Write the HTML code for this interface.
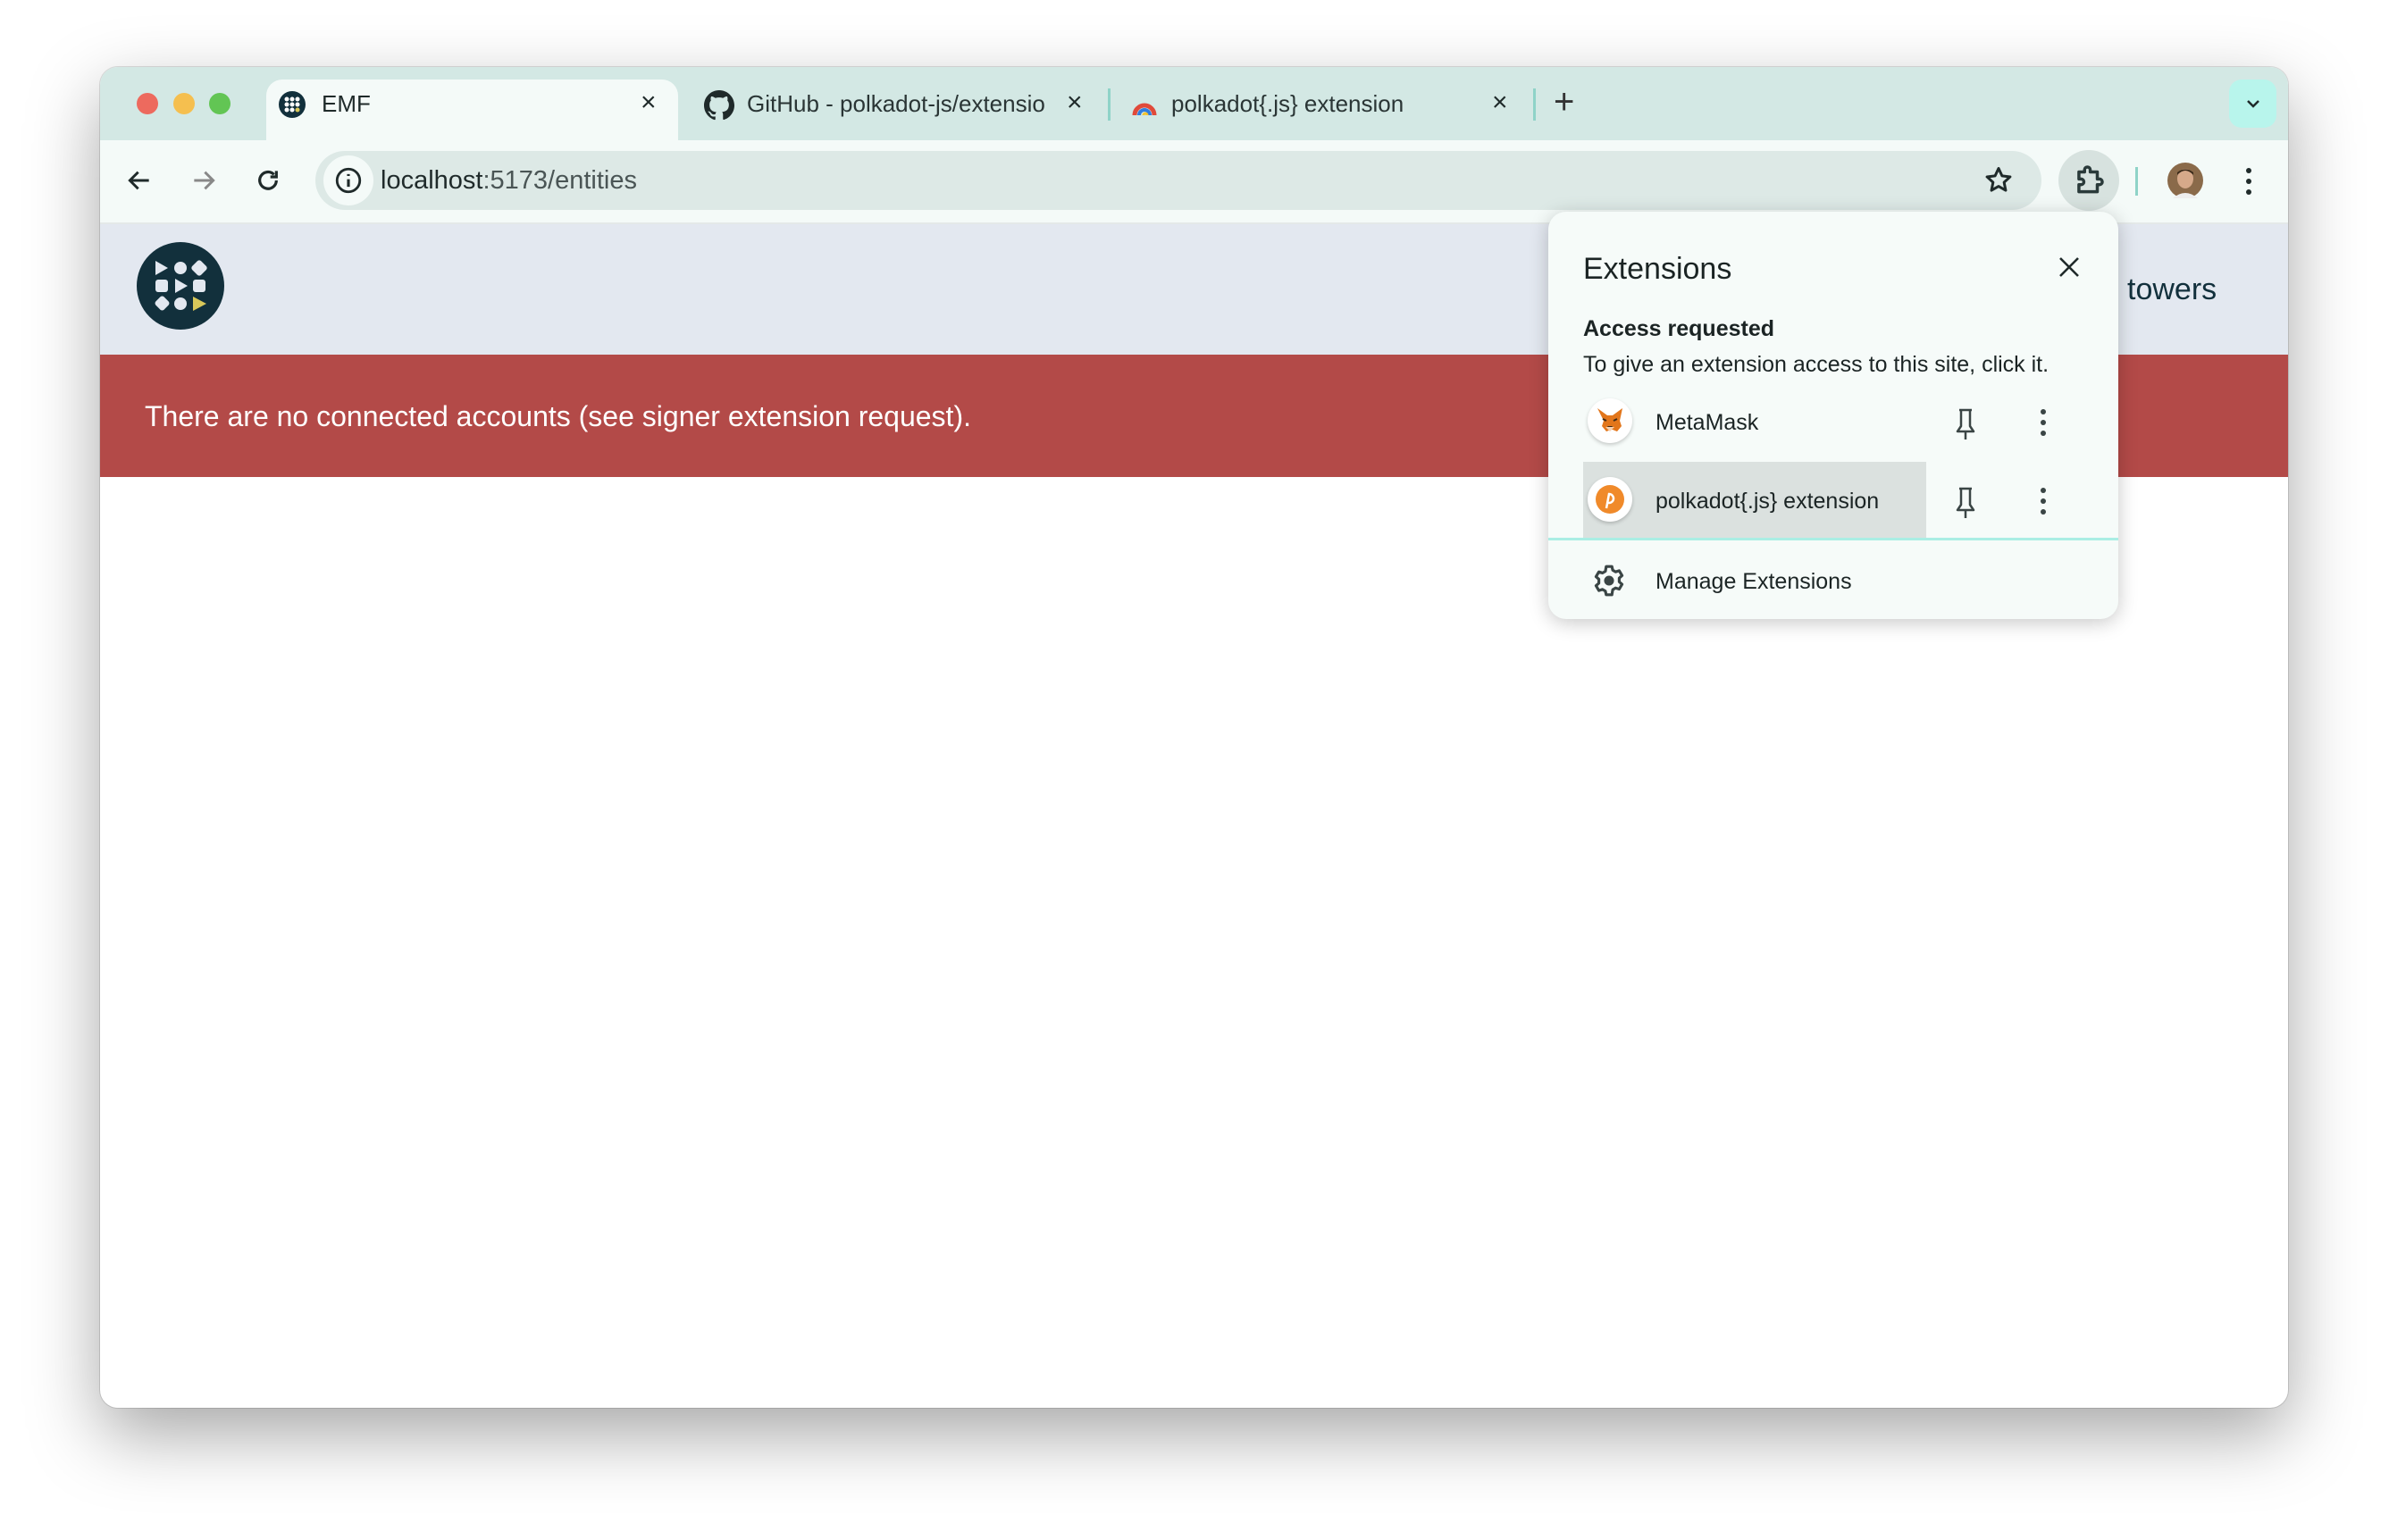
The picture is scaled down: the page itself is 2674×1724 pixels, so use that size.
<!DOCTYPE html>
<html><head><meta charset="utf-8"><style>
*{margin:0;padding:0;box-sizing:border-box}
body{width:2674px;height:1724px;background:#fff;position:relative;overflow:hidden;font-family:"Liberation Sans",sans-serif;color:#1f2a2a}
.abs{position:absolute}
#win{left:112px;top:75px;width:2449px;height:1501px;border-radius:20px;background:#fff;overflow:hidden;box-shadow:0 30px 80px rgba(0,0,0,.35),0 0 0 1px rgba(0,0,0,.12)}
.t{position:absolute;white-space:nowrap}
</style></head><body>
<div id="win" class="abs">
 <div class="abs" style="left:0;top:0;width:2449px;height:82px;background:#d3e8e4"></div>
 <div class="abs" style="left:41px;top:29px;width:24px;height:24px;border-radius:50%;background:#ed6a5e"></div>
 <div class="abs" style="left:82px;top:29px;width:24px;height:24px;border-radius:50%;background:#f5bf4f"></div>
 <div class="abs" style="left:122px;top:29px;width:24px;height:24px;border-radius:50%;background:#62c554"></div>
 <div class="abs" style="left:186px;top:14px;width:461px;height:80px;background:#f4faf8;border-radius:18px 18px 0 0"></div>
 <svg class="abs" style="left:199px;top:26px" width="32" height="32" viewBox="0 0 32 32"><circle cx="16" cy="16" r="15" fill="#12303c"/><g fill="#fff"><circle cx="10" cy="10" r="2.5"/><circle cx="16" cy="10" r="2.5"/><circle cx="22" cy="10" r="2.5"/><circle cx="10" cy="16" r="2.5"/><circle cx="16" cy="16" r="2.5"/><circle cx="22" cy="16" r="2.5"/><circle cx="10" cy="22" r="2.5"/><circle cx="16" cy="22" r="2.5"/></g><circle cx="22" cy="22" r="2.5" fill="#d8c85a"/></svg>
 <div class="t" style="left:248px;top:26px;font-size:26px">EMF</div>
 <div class="t" style="left:605px;top:23px;font-size:30px">×</div>
 <svg class="abs" style="left:676px;top:26px" width="34" height="34" viewBox="0 0 16 16"><path fill="#1f2a2a" d="M8 0C3.6 0 0 3.6 0 8c0 3.5 2.3 6.5 5.5 7.6.4.1.5-.2.5-.4v-1.4c-2.2.5-2.7-1-2.7-1-.4-.9-.9-1.200-.9-1.2-.7-.5.1-.5.1-.5.8.1 1.2.8 1.2.8.7 1.2 1.9.9 2.3.7.1-.5.3-.9.5-1.1-1.8-.2-3.6-.9-3.6-4 0-.9.3-1.6.8-2.1-.1-.2-.4-1 .1-2.1 0 0 .7-.2 2.2.8.6-.2 1.3-.3 2-.3s1.4.1 2 .3c1.5-1 2.2-.8 2.2-.8.4 1.1.2 1.9.1 2.1.5.6.8 1.3.8 2.1 0 3.1-1.9 3.7-3.6 3.9.3.3.5.8.5 1.5v2.2c0 .2.1.5.6.4C13.7 14.5 16 11.5 16 8c0-4.4-3.6-8-8-8z"/></svg>
 <div class="t" style="left:724px;top:26px;font-size:26px;color:#2a3535">GitHub - polkadot-js/extensio</div>
 <div class="t" style="left:1082px;top:23px;font-size:30px">×</div>
 <div class="abs" style="left:1128px;top:24px;width:3px;height:36px;background:#8fd3c8"></div>
 <svg class="abs" style="left:1155px;top:30px" width="28" height="28" viewBox="0 0 28 28"><path d="M3 24a11 11 0 0 1 22 0" fill="none" stroke="#e04a3a" stroke-width="5"/><path d="M8 24a6 6 0 0 1 12 0" fill="none" stroke="#2f7de0" stroke-width="4"/><path d="M13 24a2 2 0 0 1 4 0" fill="none" stroke="#f4c430" stroke-width="3"/></svg>
 <div class="t" style="left:1199px;top:26px;font-size:26px;color:#2a3535">polkadot{.js} extension</div>
 <div class="t" style="left:1558px;top:23px;font-size:30px">×</div>
 <div class="abs" style="left:1604px;top:24px;width:3px;height:36px;background:#8fd3c8"></div>
 <div class="t" style="left:1627px;top:17px;font-size:40px;font-weight:300;color:#333">+</div>
 <div class="abs" style="left:2383px;top:14px;width:53px;height:54px;border-radius:14px;background:#b8f5ec"></div>
 <svg class="abs" style="left:2400px;top:32px" width="20" height="18" viewBox="0 0 20 18"><path d="M4 6l6 6 6-6" fill="none" stroke="#1f2a2a" stroke-width="2.5"/></svg>
 <div class="abs" style="left:0;top:82px;width:2449px;height:92px;background:#f4faf8"></div>
 <svg class="abs" style="left:28px;top:111px" width="32" height="32" viewBox="0 0 24 24"><path d="M20 12H5M11 5l-7 7 7 7" fill="none" stroke="#1f2a2a" stroke-width="2.2"/></svg>
 <svg class="abs" style="left:100px;top:111px" width="32" height="32" viewBox="0 0 24 24"><path d="M4 12h15M13 5l7 7-7 7" fill="none" stroke="#888" stroke-width="2.2"/></svg>
 <svg class="abs" style="left:172px;top:111px" width="32" height="32" viewBox="0 0 24 24"><path d="M19 12a7 7 0 1 1-2-5" fill="none" stroke="#1f2a2a" stroke-width="2.4"/><path d="M19 4v5h-5" fill="none" stroke="#1f2a2a" stroke-width="2.4"/></svg>
 <div class="abs" style="left:241px;top:94px;width:1932px;height:66px;border-radius:33px;background:#dde9e6"></div>
 <div class="abs" style="left:250px;top:99px;width:56px;height:56px;border-radius:50%;background:#f4faf8"></div>
 <svg class="abs" style="left:261px;top:110px" width="34" height="34" viewBox="0 0 24 24"><circle cx="12" cy="12" r="9" fill="none" stroke="#1f2a2a" stroke-width="2"/><path d="M12 11v6M12 7v1.5" stroke="#1f2a2a" stroke-width="2.2"/></svg>
 <div class="t" style="left:314px;top:111px;font-size:29px;color:#1f2a2a">localhost<span style="color:#4a5555">:5173/entities</span></div>
 <svg class="abs" style="left:2107px;top:109px" width="36" height="36" viewBox="0 0 24 24"><path d="M12 3l2.6 5.6 6 .7-4.5 4.1 1.2 6-5.3-3-5.3 3 1.2-6L3.4 9.3l6-.7z" fill="none" stroke="#1f2a2a" stroke-width="2" stroke-linejoin="round"/></svg>
 <div class="abs" style="left:2192px;top:93px;width:68px;height:68px;border-radius:50%;background:#d7e2df"></div>
 <svg class="abs" style="left:2207px;top:108px" width="38" height="38" viewBox="0 0 24 24"><path d="M5 6h4V4.5a2 2 0 0 1 4 0V6h5v5h1.5a2 2 0 0 1 0 4H18v5H5v-5h1.5a2 2 0 0 0 0-4H5z" fill="none" stroke="#2a3a3a" stroke-width="2.2" stroke-linejoin="round"/></svg>
 <div class="abs" style="left:2278px;top:112px;width:3px;height:32px;background:#8fd3c8"></div>
 <svg class="abs" style="left:2314px;top:107px" width="40" height="40" viewBox="0 0 40 40"><circle cx="20" cy="20" r="20" fill="#8a6a4a"/><ellipse cx="20" cy="18" rx="9" ry="11" fill="#d6a98a"/><path d="M11 14q9-10 18 0v-3q-9-7-18 0z" fill="#3a2a1a"/><path d="M6 40q14-12 28 0z" fill="#eee"/></svg>
 <svg class="abs" style="left:2393px;top:110px" width="24" height="36" viewBox="0 0 24 36"><circle cx="12" cy="6" r="3" fill="#1f2a2a"/><circle cx="12" cy="18" r="3" fill="#1f2a2a"/><circle cx="12" cy="30" r="3" fill="#1f2a2a"/></svg>
 <div class="abs" style="left:0;top:174px;width:2449px;height:2px;background:#e4e9e8"></div>
 <div class="abs" style="left:0;top:176px;width:2449px;height:146px;background:#e3e8f0"></div>
 <svg class="abs" style="left:40px;top:195px" width="100" height="100" viewBox="0 0 100 100"><circle cx="50" cy="50" r="49" fill="#12303c"/><g fill="#e3e8f0"><path d="M22 22l14 8-14 8z"/><circle cx="50" cy="30" r="7"/><rect x="64" y="23" width="14" height="14" rx="3" transform="rotate(45 71 30)"/><rect x="22" y="43" width="14" height="14" rx="3"/><path d="M44 42l14 8-14 8z"/><rect x="64" y="43" width="14" height="14" rx="3"/><rect x="23" y="63" width="13" height="13" rx="3" transform="rotate(45 29.5 69.5)"/><circle cx="50" cy="70" r="7"/></g><path d="M64 62l15 8-15 8z" fill="#d8c85a"/></svg>
 <div class="t" style="left:2269px;top:230px;font-size:34px;color:#12303c">towers</div>
 <div class="abs" style="left:0;top:322px;width:2449px;height:137px;background:#b34a48"></div>
 <div class="t" style="left:50px;top:373px;font-size:32px;color:#fff">There are no connected accounts (see signer extension request).</div>
</div>
<div class="abs" style="left:1733px;top:237px;width:638px;height:456px;border-radius:20px;background:#f6fbf9;box-shadow:0 4px 22px rgba(0,0,0,.22);overflow:hidden">
 <div class="t" style="left:39px;top:45px;font-size:34px;color:#1b2424">Extensions</div>
 <svg class="abs" style="left:568px;top:47px" width="30" height="30" viewBox="0 0 30 30"><path d="M5 5l20 20M25 5L5 25" stroke="#1f2a2a" stroke-width="2.6"/></svg>
 <div class="t" style="left:39px;top:117px;font-size:25px;font-weight:bold;color:#1b2424">Access requested</div>
 <div class="t" style="left:39px;top:157px;font-size:25px;color:#1b2424">To give an extension access to this site, click it.</div>
 <div class="abs" style="left:44px;top:209px;width:50px;height:50px;border-radius:50%;background:#fff;box-shadow:0 2px 4px rgba(0,0,0,.2)"></div>
 <svg class="abs" style="left:52px;top:218px" width="34" height="32" viewBox="0 0 34 32"><path d="M3 2l11 8h6l11-8-3 14 2 6-5 6-5-2h-2l-5 2-5-6 2-6z" fill="#e2761b"/><path d="M14 22h6l-3 5z" fill="#3a2a1a"/><path d="M9 14l4 2M25 14l-4 2" stroke="#3a2a1a" stroke-width="2"/><path d="M12 23l5 5 5-5" fill="#f5d1b0"/></svg>
 <div class="t" style="left:120px;top:222px;font-size:25px;color:#1b2424">MetaMask</div>
 <div class="abs" style="left:39px;top:280px;width:384px;height:85px;background:#dbe1df"></div>
 <div class="abs" style="left:44px;top:297px;width:50px;height:50px;border-radius:50%;background:#fff;box-shadow:0 2px 4px rgba(0,0,0,.2)"></div>
 <svg class="abs" style="left:50px;top:303px" width="38" height="38" viewBox="0 0 38 38"><circle cx="19" cy="19" r="16" fill="#f08a2a"/><path d="M15 29l3-16a5 5 0 1 1 0 10h-2" fill="none" stroke="#fff" stroke-width="2.5"/></svg>
 <div class="t" style="left:120px;top:310px;font-size:25px;color:#1b2424">polkadot{.js} extension</div>
 <svg class="abs" style="left:452px;top:218px" width="30" height="40" viewBox="0 0 30 40"><path d="M8 4h14M10 4v18l-4 6h18l-4-6V4M15 28v9" fill="none" stroke="#3a4545" stroke-width="2.5" stroke-linejoin="round"/></svg>
 <svg class="abs" style="left:452px;top:306px" width="30" height="40" viewBox="0 0 30 40"><path d="M8 4h14M10 4v18l-4 6h18l-4-6V4M15 28v9" fill="none" stroke="#3a4545" stroke-width="2.5" stroke-linejoin="round"/></svg>
 <svg class="abs" style="left:542px;top:218px" width="24" height="36" viewBox="0 0 24 36"><circle cx="12" cy="6" r="3" fill="#3a4545"/><circle cx="12" cy="18" r="3" fill="#3a4545"/><circle cx="12" cy="30" r="3" fill="#3a4545"/></svg>
 <svg class="abs" style="left:542px;top:306px" width="24" height="36" viewBox="0 0 24 36"><circle cx="12" cy="6" r="3" fill="#3a4545"/><circle cx="12" cy="18" r="3" fill="#3a4545"/><circle cx="12" cy="30" r="3" fill="#3a4545"/></svg>
 <div class="abs" style="left:0;top:365px;width:638px;height:3px;background:#aaeee4"></div>
 <svg class="abs" style="left:49px;top:394px" width="38" height="38" viewBox="0 0 24 24"><path d="M12 8.5a3.5 3.5 0 1 0 0 7 3.5 3.5 0 0 0 0-7z" fill="#3a4545"/><path d="M10 2h4l.6 2.6 2 1.2 2.6-.8 2 3.4-2 1.8v2.6l2 1.8-2 3.4-2.6-.8-2 1.2L14 22h-4l-.6-2.6-2-1.2-2.6.8-2-3.4 2-1.8V11l-2-1.8 2-3.4 2.6.8 2-1.2z" fill="none" stroke="#3a4545" stroke-width="2" stroke-linejoin="round"/></svg>
 <div class="t" style="left:120px;top:400px;font-size:25px;color:#1b2424">Manage Extensions</div>
</div>
</body></html>
